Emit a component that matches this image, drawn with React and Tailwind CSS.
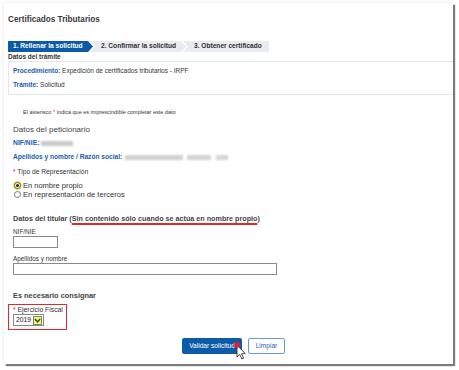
import React from 'react';

const font = { fontFamily: '"Liberation Sans", Arial, sans-serif' };

function Step({ n, label, active, first, last, w }) {
    const clip = first
        ? '[clip-path:polygon(0_0,calc(100%-5px)_0,100%_50%,calc(100%-5px)_100%,0_100%)]'
        : last
            ? '[clip-path:polygon(0_0,100%_0,100%_100%,0_100%,5px_50%)]'
            : '[clip-path:polygon(0_0,calc(100%-5px)_0,100%_50%,calc(100%-5px)_100%,0_100%,5px_50%)]';
    return (
        <div
            className={`${clip} h-[11px] flex items-center whitespace-nowrap text-[6.6px] font-bold leading-none ${active ? 'bg-[#0d5aa9] text-white' : 'bg-[#e8ebef] text-[#333]'} ${first ? 'pl-[5px]' : '-ml-[3px] pl-[11px]'}`}
            style={{ width: w }}
        >
            {n}. {label}
        </div>
    );
}

export default function App() {
    return (
        <div className="w-[459px] h-[370px] bg-white relative overflow-hidden" style={font}>
            <div className="absolute left-[4px] top-[3px] w-[449px] h-[361px] bg-white shadow-[0_0_3px_rgba(0,0,0,0.12),2px_2px_1px_rgba(0,0,0,0.5)]">
                <div className="pl-[4px] text-[#333]">
                    <div className="mt-[10px] h-[14px] leading-[14px] text-[8.2px] font-bold text-[#3a3a3a]">Certificados Tributarios</div>

                    <div className="mt-[14px] flex">
                        <Step n="1" label="Rellenar la solicitud" active first w="85px" />
                        <Step n="2" label="Confirmar la solicitud" w="96px" />
                        <Step n="3" label="Obtener certificado" last w="86px" />
                    </div>

                    <div className="h-[9px] leading-[9px] text-[6.5px] font-bold text-[#333]">Datos del trámite</div>

                    <div className="border-y border-l border-[#e4e8ee] pl-[4px] pt-[4px] pb-[4px] text-[6.5px] leading-[10px]">
                        <div><span className="font-bold text-[#1a5db0]">Procedimiento:</span> Expedición de certificados tributarios - IRPF</div>
                        <div className="mt-[4px]"><span className="font-bold text-[#1a5db0]">Trámite:</span> Solicitud</div>
                    </div>

                    <div className="pl-[5px]">
                        <div className="mt-[13px] ml-[10px] h-[9px] leading-[9px] text-[5.5px] text-[#333]">
                            El asterisco <span className="text-[#e0282e]">*</span> indica que es imprescindible completar este dato
                        </div>

                        <div className="mt-[7px] h-[12px] leading-[12px] text-[8px] text-[#444]">Datos del peticionario</div>

                        <div className="mt-[2px] h-[10px] flex items-center text-[6.8px]">
                            <span className="font-bold text-[#1a5db0]">NIF/NIE:</span>
                            <span className="ml-[2px] w-[32px] h-[5px] bg-[#cacaca] blur-[1.2px]"></span>
                        </div>

                        <div className="mt-[4px] h-[10px] flex items-center text-[6.6px]">
                            <span className="font-bold text-[#1a5db0]">Apellidos y nombre / Razón social:</span>
                            <span className="ml-[3px] w-[58px] h-[5px] bg-[#cfcfcf] blur-[1.2px]"></span>
                            <span className="ml-[4px] w-[24px] h-[5px] bg-[#d4d4d4] blur-[1.2px]"></span>
                            <span className="ml-[5px] w-[12px] h-[5px] bg-[#d4d4d4] blur-[1.2px]"></span>
                        </div>

                        <div className="mt-[5px] h-[10px] leading-[10px] text-[6.7px] text-[#333]">
                            <span className="text-[#e0282e]">*</span> Tipo de Representación
                        </div>

                        <div className="mt-[4px] h-[9px] flex items-center text-[7.5px] text-[#333]">
                            <span className="w-[9px] h-[9px] rounded-full bg-[#f3e33a] flex items-center justify-center">
                                <span className="w-[7px] h-[7px] rounded-full border border-[#555] bg-white flex items-center justify-center">
                                    <span className="w-[3px] h-[3px] rounded-full bg-[#222]"></span>
                                </span>
                            </span>
                            <span className="ml-[1px]">En nombre propio</span>
                        </div>
                        <div className="h-[9px] flex items-center text-[7.6px] text-[#333]">
                            <span className="w-[9px] h-[9px] flex items-center justify-center">
                                <span className="w-[7px] h-[7px] rounded-full border border-[#777] bg-white"></span>
                            </span>
                            <span className="ml-[1px]">En representación de terceros</span>
                        </div>

                        <div className="mt-[14px] h-[11px] leading-[11px] text-[7.2px] font-bold text-[#444] whitespace-nowrap">
                            Datos del titular (<span className="underline decoration-[#e0282e] decoration-[1.5px] underline-offset-[2px]">Sin contenido sólo cuando se actúa en nombre propio</span>)
                        </div>

                        <div className="mt-[4px] h-[8px] leading-[8px] text-[6.4px] text-[#333]">NIF/NIE</div>
                        <div className="w-[45px] h-[12px] border border-[#8a8a8a] bg-white"></div>

                        <div className="mt-[7px] h-[8px] leading-[8px] text-[6.4px] text-[#333]">Apellidos y nombre</div>
                        <div className="w-[264px] h-[12px] border border-[#8a8a8a] bg-white"></div>

                        <div className="mt-[15px] h-[12px] leading-[12px] text-[7.4px] font-bold text-[#444]">Es necesario consignar</div>
                    </div>

                    <div className="mt-[2px] w-[59px] border border-[#e0282e] pl-[4px] pt-[1px] pb-[3px]">
                        <div className="h-[8px] leading-[8px] text-[6.8px] text-[#333] whitespace-nowrap">
                            <span className="text-[#e0282e]">*</span> Ejercicio Fiscal
                        </div>
                        <div className="w-[31px] h-[12px] border border-[#8a8a8a] bg-white flex items-center">
                            <span className="ml-[2px] text-[6.8px] leading-none text-[#222]">2019</span>
                            <span className="ml-auto mr-[1px] w-[9px] h-[9px] border border-[#8a8a40] bg-[#f2ee9a] flex items-center justify-center">
                                <svg width="7" height="5" viewBox="0 0 7 5">
                                    <path d="M0.8 1 L3.5 3.8 L6.2 1" fill="none" stroke="#2f5a10" strokeWidth="1.5" />
                                </svg>
                            </span>
                        </div>
                    </div>

                    <div className="mt-[8px] ml-[174px] flex gap-[6px]">
                        <div className="w-[60px] h-[16px] rounded-[2px] bg-[#0d5aa9] text-white text-[6.6px] flex items-center justify-center">Validar solicitud</div>
                        <div className="w-[37px] h-[16px] rounded-[2px] border border-[#6a9ad6] bg-white text-[#2a66b0] text-[6.6px] flex items-center justify-center">Limpiar</div>
                    </div>
                </div>
            </div>

            <svg className="absolute left-[232px] top-[341px]" width="16" height="20" viewBox="0 0 16 20">
                <path d="M5 4 L5 16 L7.8 13.4 L9.8 18 L11.6 17.2 L9.6 12.8 L13.2 12.6 Z" fill="white" stroke="#333" strokeWidth="0.9" strokeLinejoin="round" />
                <g stroke="#e0202a" strokeWidth="1.4">
                    <line x1="5" y1="0.5" x2="5" y2="7.5" />
                    <line x1="1.5" y1="4" x2="8.5" y2="4" />
                    <line x1="2.5" y1="1.5" x2="7.5" y2="6.5" />
                    <line x1="7.5" y1="1.5" x2="2.5" y2="6.5" />
                </g>
            </svg>
        </div>
    );
}
